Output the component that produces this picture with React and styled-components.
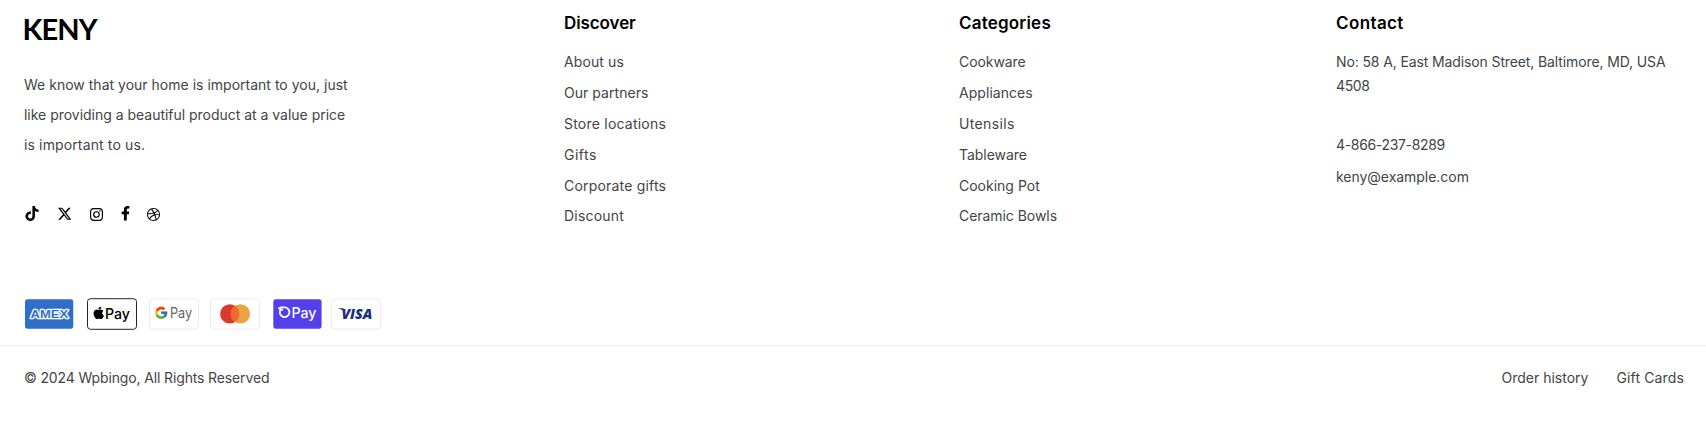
import React from "react";
import styled, { createGlobalStyle } from "styled-components";
import { FaTiktok, FaFacebookF } from "react-icons/fa";
import { BsTwitterX, BsInstagram, BsDribbble, BsApple } from "react-icons/bs";
import { FcGoogle } from "react-icons/fc";

const GlobalStyle = createGlobalStyle`
  * { box-sizing: border-box; }
  body { margin: 0; background: #fff; }
`;

const Footer = styled.footer`
  height: 422px;
  color: #444;
  font: 400 14px/24px Inter, sans-serif;
`;

const Main = styled.div`
  display: grid;
  grid-template-columns: 540px 395px 377px 1fr;
  height: 298px;
  padding: 11px 24px 0;
`;

const Brand = styled.div`
  display: flex;
  flex-direction: column;
`;

const Logo = styled.div`
  height: 59px;
  margin-left: -1.5px;
  color: #000;
  font: 700 29px/36px Lato, sans-serif;
  letter-spacing: ${(p) => p.$tracking}px;
`;

const About = styled.p`
  margin: 0;
  line-height: 30px;
`;

const Line = styled.span`
  display: block;
  white-space: nowrap;
  letter-spacing: ${(p) => p.$tracking || 0}px;
`;

const Socials = styled.div`
  display: flex;
  align-items: center;
  height: 16px;
  margin-top: 45px;
  padding-left: 0.5px;
  color: #000;
`;

const Social = styled.a`
  display: flex;
  justify-content: center;
  width: ${(p) => p.$width}px;
  margin-right: ${(p) => p.$gap || 0}px;
  padding-top: ${(p) => p.$drop || 0}px;
`;

const Heading = styled.h2`
  margin: 0 0 15px;
  color: #000;
  font-size: 17px;
  font-weight: 560;
  line-height: 24px;
  letter-spacing: ${(p) => p.$tracking}px;
`;

const Links = styled.ul`
  display: flex;
  flex-direction: column;
  gap: 6.88px;
  margin: 0;
  padding: 0;
  list-style: none;
`;

const Address = styled.address`
  font-style: normal;
`;

const Phone = styled.div`
  margin: 35px 0 8px;
`;

const Payments = styled.div`
  display: flex;
  height: 48px;
  padding-left: 24px;
  border-bottom: 1px solid #ededed;
`;

const Card = styled.svg`
  flex: none;
  width: 50px;
  height: 32px;
  margin-right: ${(p) => p.$gap || 0}px;
`;

const Bottom = styled.div`
  display: flex;
  justify-content: space-between;
  padding: 20px 22px 0 24px;
`;

const BottomLinks = styled.nav`
  display: flex;
  gap: 28px;
`;

const discover = [
  ["About us", 0.11],
  ["Our partners", 0.04],
  ["Store locations", 0.22],
  ["Gifts", 0.5],
  ["Corporate gifts", 0.19],
  ["Discount", 0.21],
];

const categories = [
  ["Cookware", -0.08],
  ["Appliances", 0.05],
  ["Utensils", 0.36],
  ["Tableware", -0.04],
  ["Cooking Pot", 0],
  ["Ceramic Bowls", -0.05],
];

function LinkColumn({ title, tracking, items }) {
  return (
    <section>
      <Heading $tracking={tracking}>{title}</Heading>
      <Links>
        {items.map(([label, t]) => (
          <li key={label}>
            <Line $tracking={t}>{label}</Line>
          </li>
        ))}
      </Links>
    </section>
  );
}

function PayText({ x, y = 20.6, width, color, weight = 480 }) {
  return (
    <text
      x={x}
      y={y}
      fill={color}
      fontFamily="Inter, sans-serif"
      fontSize="14.6"
      fontWeight={weight}
      textLength={width}
      lengthAdjust="spacingAndGlyphs"
    >
      Pay
    </text>
  );
}

function Plate({ fill = "#fff", stroke = "#ececec" }) {
  return <rect x="0.5" y="1" width="49" height="30" rx="3" fill={fill} stroke={stroke} />;
}

function PaymentCards() {
  return (
    <Payments>
      <Card $gap={13} viewBox="0 0 50 32">
        <rect x="1" y="1.3" width="48.3" height="29.4" rx="2.6" fill="#2f6fc7" />
        <text
          x="5.6"
          y="20"
          fill="#2f6fc7"
          stroke="#fff"
          strokeWidth="2.6"
          strokeLinejoin="round"
          paintOrder="stroke"
          fontFamily="Liberation Sans, sans-serif"
          fontWeight="700"
          fontSize="11.8"
          textLength="37.5"
          lengthAdjust="spacingAndGlyphs"
          transform="translate(1 0)"
        >
          AMEX
        </text>
      </Card>
      <Card $gap={12} viewBox="0 0 50 32">
        <rect x="0.5" y="0.7" width="49" height="30.6" rx="3" fill="#fff" stroke="#222" />
        <BsApple x="5.6" y="8.7" size={12.2} color="#000" />
        <PayText x={18} width={25} color="#000" />
      </Card>
      <Card $gap={11} viewBox="0 0 50 32">
        <Plate />
        <FcGoogle x="5" y="7.5" size={14.5} />
        <PayText x={21} y={20.2} width={22.2} color="#63666a" weight={400} />
      </Card>
      <Card $gap={12} viewBox="0 0 50 32">
        <Plate />
        <circle cx="19.8" cy="15.9" r="9.7" fill="#d93a2e" />
        <circle cx="30.4" cy="15.9" r="9.7" fill="#eba243" />
        <path d="M25.1 7.8a9.7 9.7 0 0 1 0 16.2a9.7 9.7 0 0 1 0-16.2z" fill="#ed6b2d" />
      </Card>
      <Card $gap={9} viewBox="0 0 50 32">
        <rect x="1.3" y="1.3" width="48.3" height="29.4" rx="2.6" fill="#5340ea" />
        <path
          d="M6.8 9.4c.6 1.8 2 2.5 4.2 2.3M8.2 9.4h4.4a4.8 4.8 0 1 1-4.3 2.7"
          fill="none"
          stroke="#fff"
          strokeWidth="1.8"
        />
        <PayText x={19.4} y={20.1} width={25} color="#fff" />
      </Card>
      <Card viewBox="0 0 50 32">
        <Plate />
        <text
          x="10.4"
          y="20.9"
          fill="#1b2f80"
          fontFamily="Open Sans, sans-serif"
          fontStyle="italic"
          fontWeight="800"
          fontSize="14.8"
          textLength="31"
          lengthAdjust="spacingAndGlyphs"
        >
          VISA
        </text>
        <path d="M7.2 10.2h5.2l1.4 4.2c-1.5-1.9-3.7-3.2-6.6-3.8z" fill="#1b2f80" />
      </Card>
    </Payments>
  );
}

export default function App() {
  return (
    <Footer>
      <GlobalStyle />
      <Main>
        <Brand>
          <Logo $tracking={-0.9}>KENY</Logo>
          <About>
            <Line $tracking={0.01}>We know that your home is important to you, just</Line>
            <Line $tracking={-0.02}>like providing a beautiful product at a value price</Line>
            <Line $tracking={0.13}>is important to us.</Line>
          </About>
          <Socials>
            <Social $width={14} $gap={19}>
              <FaTiktok size={15} />
            </Social>
            <Social $width={14} $gap={18} $drop={1}>
              <BsTwitterX size={13.5} />
            </Social>
            <Social $width={13} $gap={18} $drop={2}>
              <BsInstagram size={13} />
            </Social>
            <Social $width={9} $gap={17} $drop={1}>
              <FaFacebookF size={14.5} />
            </Social>
            <Social $width={13} $drop={2}>
              <BsDribbble size={13} />
            </Social>
          </Socials>
        </Brand>
        <LinkColumn title="Discover" tracking={-0.09} items={discover} />
        <LinkColumn title="Categories" tracking={0.2} items={categories} />
        <section>
          <Heading $tracking={0.38}>Contact</Heading>
          <Address>
            <Line $tracking={-0.12}>No: 58 A, East Madison Street, Baltimore, MD, USA</Line>
            <Line $tracking={-0.4}>4508</Line>
          </Address>
          <Phone>
            <Line $tracking={-0.33}>4-866-237-8289</Line>
          </Phone>
          <Line $tracking={-0.03}>keny@example.com</Line>
        </section>
      </Main>
      <PaymentCards />
      <Bottom>
        <Line $tracking={-0.14}>© 2024 Wpbingo, All Rights Reserved</Line>
        <BottomLinks>
          <Line $tracking={0}>Order history</Line>
          <Line $tracking={0.14}>Gift Cards</Line>
        </BottomLinks>
      </Bottom>
    </Footer>
  );
}
